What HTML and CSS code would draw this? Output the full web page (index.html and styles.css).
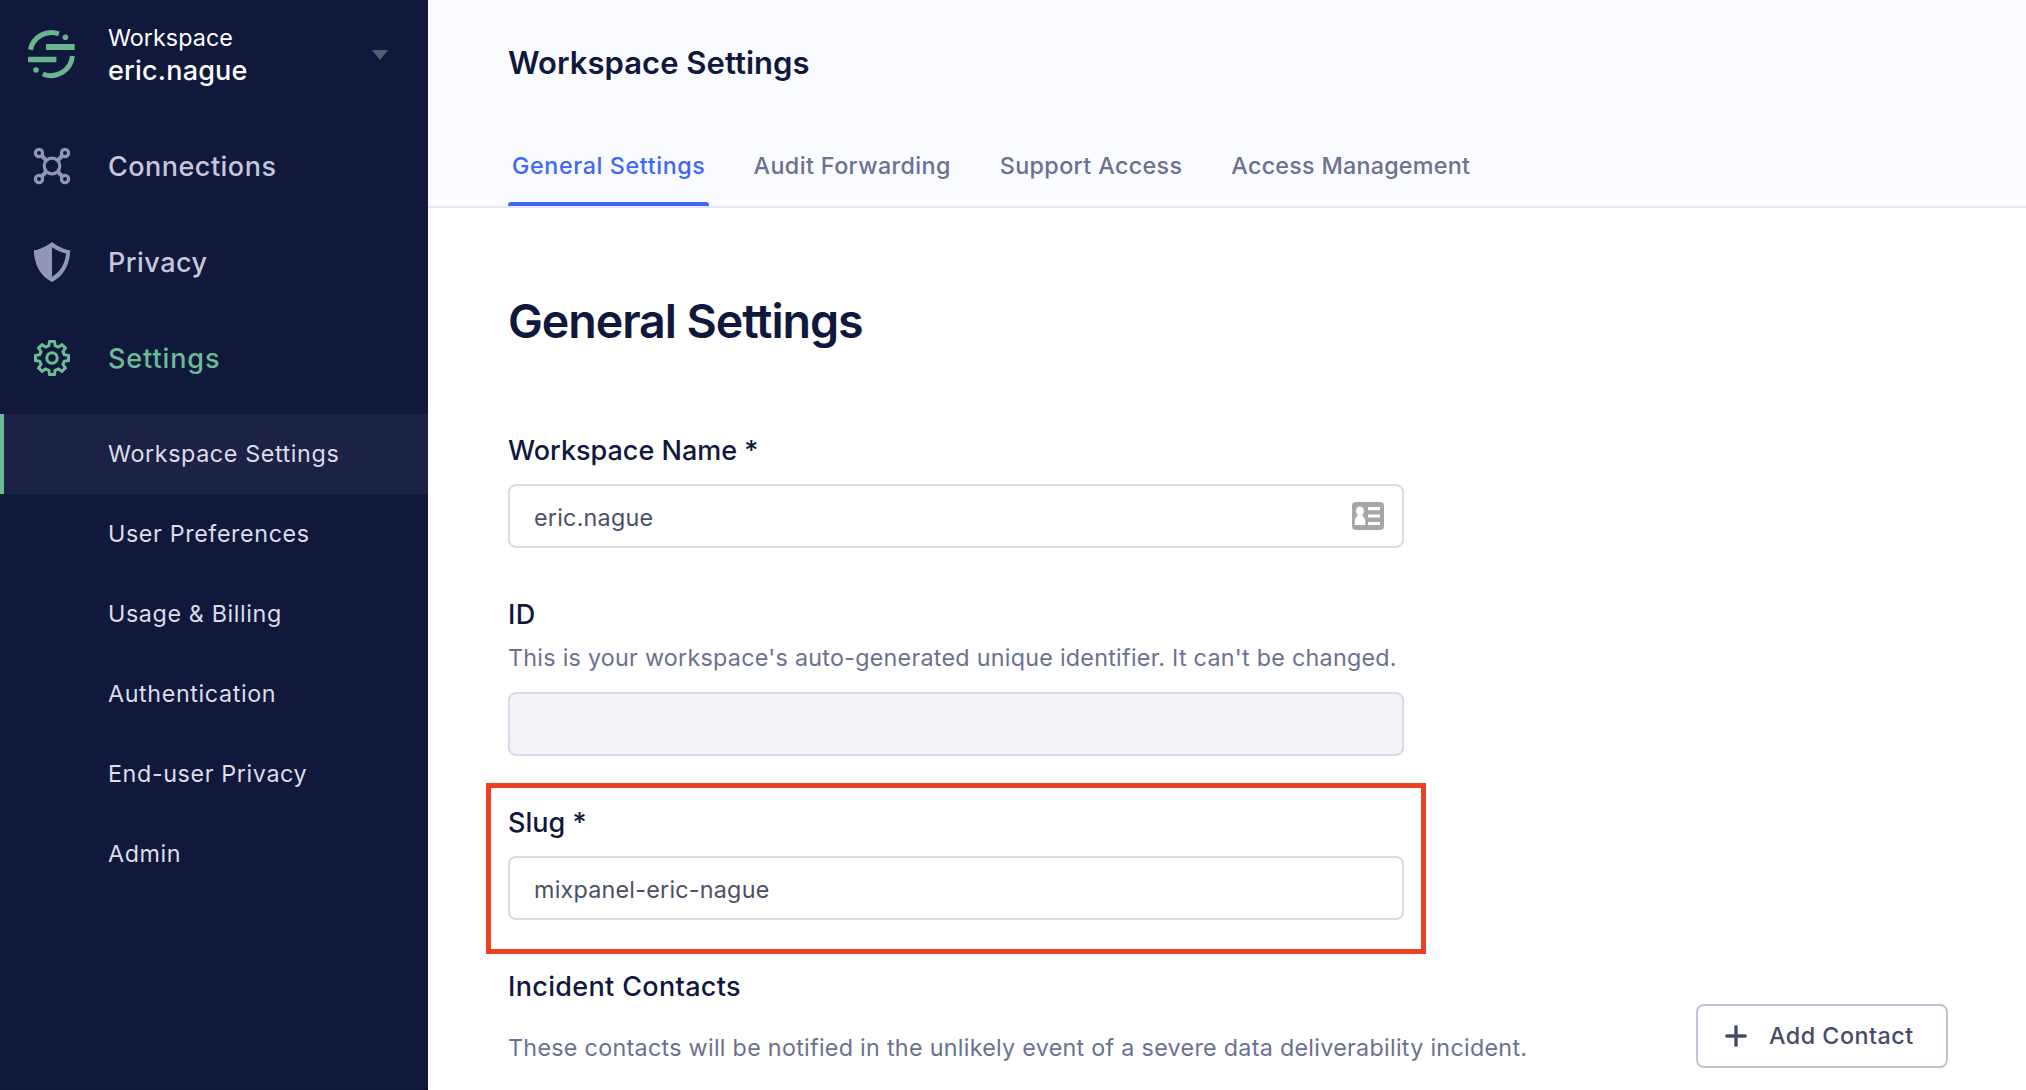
FILE: index.html
```html
<!DOCTYPE html>
<html lang="en">
<head>
<meta charset="utf-8">
<title>Workspace Settings</title>
<link rel="stylesheet" href="styles.css">
</head>
<body>
<div class="app">
  <aside class="sidebar">
    <div class="workspace">
      <svg class="logo" viewBox="24 26 56 56" fill="none">
        <g stroke="#6ab48e" stroke-width="5">
          <path d="M30.4 49.8A21.5 21.5 0 0 1 58.8 33.8"/>
          <path d="M72.4 56A21.5 21.5 0 0 1 42.8 74"/>
        </g>
        <g fill="#6ab48e">
          <rect x="46" y="44" width="28.7" height="6" rx=".6"/>
          <rect x="28" y="56.7" width="28.4" height="5.5" rx=".6"/>
          <circle cx="65.4" cy="37.2" r="2.8"/>
          <circle cx="36" cy="70" r="2.8"/>
        </g>
      </svg>
      <div class="workspace-text">
        <div class="workspace-label">Workspace</div>
        <div class="workspace-name">eric.nague</div>
      </div>
      <svg class="caret" viewBox="0 0 16 10"><path d="M0 0H16L8 10Z" fill="#4d6073"/></svg>
    </div>
    <nav>
      <a class="nav-item">
        <svg class="nav-icon" viewBox="32 146 40 40" fill="none" stroke="#9296b4" stroke-width="3.2">
          <circle cx="52" cy="166" r="7.8"/>
          <circle cx="39" cy="153" r="3.6"/><circle cx="65" cy="153" r="3.6"/>
          <circle cx="39" cy="179" r="3.6"/><circle cx="65" cy="179" r="3.6"/>
          <path d="M41.5 155.5L46.5 160.5M62.5 155.5L57.5 160.5M41.5 176.5L46.5 171.5M62.5 176.5L57.5 171.5" stroke-width="4"/>
        </svg>
        <span class="t-connections">Connections</span>
      </a>
      <a class="nav-item">
        <svg class="nav-icon" viewBox="32 242 40 40">
          <path fill="#9296b4" fill-rule="evenodd" d="M52 242C57 246 64 249.5 70.2 250.3C70 264 63.5 276.5 52 282C40.5 276.5 34 264 33.8 250.3C40 249.5 47 246 52 242ZM52 247.3V276.8C60.5 271.5 65 264 66 253.5C61 252.3 56 250.2 52 247.3Z"/>
        </svg>
        <span class="t-privacy">Privacy</span>
      </a>
      <a class="nav-item nav-open">
        <svg class="nav-icon" viewBox="-20 -20 40 40" fill="none" stroke="#6dbb95" stroke-width="3">
          <circle r="5.2"/>
          <path d="M-2.4-16.5H2.4L3.2-12.3L6.43-10.96L9.97-13.36L13.36-9.97L10.96-6.43L12.3-3.2L16.5-2.4V2.4L12.3 3.2L10.96 6.43L13.36 9.97L9.97 13.36L6.43 10.96L3.2 12.3L2.4 16.5H-2.4L-3.2 12.3L-6.43 10.96L-9.97 13.36L-13.36 9.97L-10.96 6.43L-12.3 3.2L-16.5 2.4V-2.4L-12.3-3.2L-10.96-6.43L-13.36-9.97L-9.97-13.36L-6.43-10.96L-3.2-12.3Z"/>
        </svg>
        <span class="t-settings">Settings</span>
      </a>
      <div class="subnav">
        <a class="sub-item active">Workspace Settings</a>
        <a class="sub-item">User Preferences</a>
        <a class="sub-item">Usage &amp; Billing</a>
        <a class="sub-item">Authentication</a>
        <a class="sub-item">End-user Privacy</a>
        <a class="sub-item">Admin</a>
      </div>
    </nav>
  </aside>

  <main class="main">
    <header class="header">
      <h2 class="page-title">Workspace Settings</h2>
      <div class="tabs">
        <a class="tab tab-general selected">General Settings</a>
        <a class="tab tab-audit">Audit Forwarding</a>
        <a class="tab tab-support">Support Access</a>
        <a class="tab tab-access">Access Management</a>
      </div>
    </header>
    <section class="content">
      <h1 class="heading">General Settings</h1>
      <div class="field">
        <label class="label required">Workspace Name *</label>
        <div class="input">
          <span>eric.nague</span>
          <svg class="card-icon" viewBox="0 0 32 28">
            <rect width="32" height="28" rx="4" fill="#a6a6a6"/>
            <g fill="#fff">
              <ellipse cx="8" cy="9" rx="4" ry="4.6"/>
              <path d="M2.7 23V20C2.7 16.5 4.5 14 6 13.2H10C11.5 14 13.3 16.5 13.3 20V23Z"/>
              <path d="M16 5H28V8.2H16ZM16 12.5H28V15.5H16ZM16 20H28V23H16Z"/>
            </g>
          </svg>
        </div>
      </div>
      <div class="field">
        <label class="label">ID</label>
        <p class="help">This is your workspace's auto-generated unique identifier. It can't be changed.</p>
        <div class="input disabled"></div>
      </div>
      <div class="field highlighted">
        <label class="label required">Slug *</label>
        <div class="input"><span>mixpanel-eric-nague</span></div>
      </div>
      <label class="label">Incident Contacts</label>
      <div class="contacts">
        <p class="help">These contacts will be notified in the unlikely event of a severe data deliverability incident.</p>
        <button class="button">
          <svg class="plus" viewBox="0 0 22 22"><path d="M11 1.8V20.2M1.8 11H20.2" stroke="#474d66" stroke-width="3.4" stroke-linecap="round"/></svg>
          <span>Add Contact</span>
        </button>
      </div>
    </section>
  </main>
</div>
</body>
</html>
```
FILE: styles.css
```css
* { box-sizing: border-box; }

body {
  margin: 0;
  font-family: "Inter", "Liberation Sans", sans-serif;
  font-size: 23.3px;
  color: #10183c;
  background: #fff;
}

h1, h2, p { margin: 0; }

.app {
  display: flex;
  height: 1090px;
  overflow: hidden;
}

/* Sidebar */
.sidebar {
  flex: 0 0 428px;
  background: #10183c;
  border-bottom: 1px solid #0c1133;
}

.workspace {
  display: flex;
  height: 118px;
  padding: 21px 40px 0 24px;
}

.logo {
  width: 56px;
  height: 56px;
  margin-top: 5px;
}

.workspace-text {
  flex: 1;
  margin-left: 28px;
  line-height: 33px;
  color: #fff;
}

.workspace-label { letter-spacing: 0.05px; }

.workspace-name {
  font-size: 27px;
  font-weight: 500;
  letter-spacing: 0.2px;
}

.caret {
  width: 16px;
  height: 10px;
  margin-top: 29px;
}

.nav-item {
  display: flex;
  align-items: center;
  gap: 36px;
  height: 96px;
  padding-left: 32px;
  font-size: 27px;
  font-weight: 500;
  color: #c5c7da;
}

.nav-icon {
  width: 40px;
  height: 40px;
}

.nav-open { color: #6dbb95; }
.t-connections, .t-privacy { letter-spacing: 0.48px; }
.t-settings { letter-spacing: 0.9px; }

.subnav { margin-top: 8px; }

.sub-item {
  display: flex;
  align-items: center;
  height: 80px;
  padding: 0 0 1px 104px;
  border-left: 4px solid transparent;
  letter-spacing: 0.62px;
  color: #dcdde6;
}

.sub-item.active {
  background: #1c2246;
  border-left-color: #6dbb95;
}

/* Main column */
.main { flex: 1; }

.header {
  height: 208px;
  padding: 43px 80px 0;
  background: #fafbff;
  border-bottom: 2px solid #e5e6f0;
}

.page-title {
  font-size: 31px;
  font-weight: 600;
  line-height: 40px;
  letter-spacing: 0.03px;
}

.tabs {
  display: flex;
  gap: 41px;
  height: 82px;
  margin-top: 41px;
}

.tab {
  position: relative;
  display: flex;
  align-items: center;
  padding: 0 4px;
  font-weight: 500;
  white-space: nowrap;
  color: #6b7190;
}

.tab-general { width: 200.5px; letter-spacing: 0.6px; }
.tab-audit { letter-spacing: 0.4px; }
.tab-support { letter-spacing: 0.36px; }
.tab-access { letter-spacing: 0.26px; }

.tab.selected { color: #4066fa; }

.tab.selected::after {
  content: "";
  position: absolute;
  inset: auto 0 0;
  height: 4px;
  border-radius: 3px 3px 0 0;
  background: #4066fa;
}

.content { padding: 85px 78px 0 80px; }

.heading {
  font-size: 46.6px;
  font-weight: 600;
  line-height: 56px;
  letter-spacing: -1.09px;
  margin-bottom: 84px;
}

.field {
  width: 896px;
  margin-bottom: 49px;
}

.label {
  display: block;
  font-size: 27px;
  font-weight: 500;
  line-height: 36px;
  letter-spacing: 0.33px;
}

.label.required { letter-spacing: 0; }

.help {
  line-height: 34px;
  letter-spacing: 0.265px;
  color: #6b7190;
}

.field .help { margin-top: 8px; }

.input {
  display: flex;
  align-items: center;
  justify-content: space-between;
  height: 64px;
  margin-top: 15px;
  padding: 3px 18px 0 24px;
  border: 2px solid #dadae6;
  border-radius: 8px;
  letter-spacing: 0.24px;
  color: #4b5068;
}

.help + .input { margin-top: 17px; }

.input.disabled { background: #f3f4f9; }

.card-icon {
  width: 32px;
  height: 28px;
  margin-top: -3px;
}

.highlighted { position: relative; }

.highlighted::after {
  content: "";
  position: absolute;
  inset: -22px -22px -34px;
  border: 5px solid #ed4025;
}

.contacts {
  display: flex;
  justify-content: space-between;
  margin-top: -1px;
}

.contacts .help {
  padding-top: 27px;
  letter-spacing: 0.29px;
}

.button {
  display: flex;
  align-items: center;
  gap: 22px;
  width: 252px;
  height: 64px;
  padding: 0 0 2px 27px;
  border: 2px solid #c1c1d8;
  border-radius: 8px;
  background: #fff;
  font: 500 23.3px "Inter", "Liberation Sans", sans-serif;
  letter-spacing: 0.5px;
  color: #474d66;
}

.plus {
  width: 22px;
  height: 22px;
  margin-top: 1px;
}
```
